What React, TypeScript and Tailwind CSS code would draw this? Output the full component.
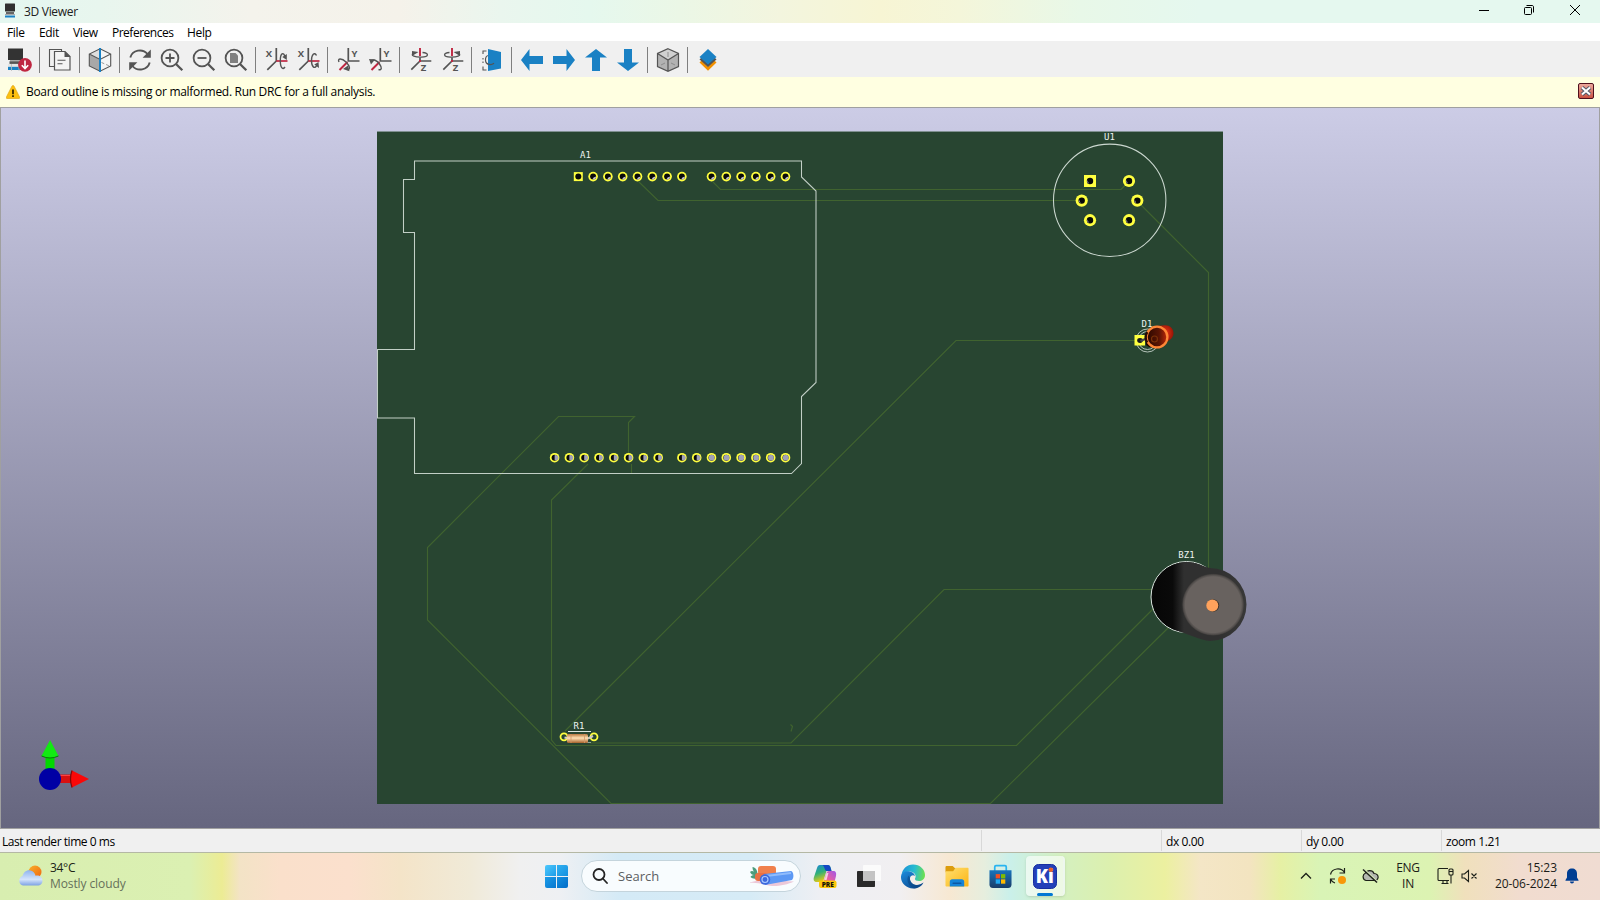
import React from "react";

const UI = "font-['Open_Sans','Noto_Sans',sans-serif]";

type IconProps = { children: React.ReactNode; size?: number };
function Icon({ children, size = 24 }: IconProps) {
  return (
    <svg width={size} height={size} viewBox="0 0 24 24" fill="none" className="block shrink-0 overflow-visible">
      {children}
    </svg>
  );
}

function Slot({ children }: { children: React.ReactNode }) {
  return <button className="flex h-9 w-8 shrink-0 items-center justify-center pt-0.5">{children}</button>;
}

function Sep() {
  return (
    <div className="flex h-9 w-2 shrink-0 items-center pl-[3px] pt-0.5">
      <div className="h-[26px] w-px bg-[#7f7f7f]" />
    </div>
  );
}

const G = "#545454";

const ReloadBoard = () => (
  <Icon>
    <rect x="0" y="0.5" width="15" height="11.5" fill="#333" />
    <rect x="2" y="12" width="11" height="1.5" fill="#aaa" />
    <rect x="1.5" y="13.3" width="12" height="2.6" fill="#555" />
    <rect x="0" y="16" width="15" height="2.5" fill="#e4e4e4" />
    <rect x="0" y="18.8" width="14" height="3.2" fill="#1a81c4" />
    <path d="M3.5 16v7M11 16v7" stroke="#bbb" strokeWidth="0.8" />
    <circle cx="17" cy="16.8" r="6.9" fill="#bf2641" />
    <path d="M17 12.5v8M13.8 17.2l3.2 3.4 3.2-3.4" stroke="#fff" strokeWidth="1.6" />
  </Icon>
);
const CopyIcon = () => (
  <Icon>
    <path d="M6.500 18.500H1.500v-17h12v2" stroke={G} strokeWidth="1.1" />
    <path d="M6.500 3.500H17l5 5v13.500H6.500z" fill="#f4f4f4" stroke={G} strokeWidth="1.2" />
    <path d="M16.500 3v6H22.500z" fill={G} />
    <path d="M9.500 12.200h8M9.500 15.700h5" stroke={G} strokeWidth="1.1" />
  </Icon>
);
const RayIcon = () => (
  <Icon>
    <path d="M12 0.8L22.700 6v12L12 23.200 1.300 18V6z" fill="#f5f5f5" />
    <path d="M12 0.800L1.300 6 12 11.500z" fill="#dedede" />
    <path d="M1.300 6L12 11.500v11.700L1.300 18z" fill="#a8a8a8" />
    <path d="M12 0.800L22.700 6v12L12 23.200 1.300 18V6zM1.300 6L12 11.500 22.700 6" stroke={G} strokeWidth="1.1" />
    <path d="M13.500 14.500l8 3.500" stroke="#999" strokeDasharray="3 2" />
    <path d="M12 0v24" stroke="#1a81c4" strokeWidth="2" />
  </Icon>
);
const RefreshIcon = () => (
  <Icon>
    <path d="M2.300 9.500C4.500 1.800 14.500 .200 19.500 6M21.700 14.500C19.500 22.200 9.500 23.800 4.500 18" stroke={G} strokeWidth="1.900" />
    <path d="M22.800 1.500v8.200h-8.200z" fill={G} />
    <path d="M1.200 22.500v-8.200h8.200z" fill={G} />
  </Icon>
);
function Magnifier({ children }: { children: React.ReactNode }) {
  return (
    <Icon>
      <circle cx="10" cy="10" r="8.400" stroke={G} strokeWidth="1.800" />
      <path d="M16 16l6.300 6.300" stroke={G} strokeWidth="2.300" />
      {children}
    </Icon>
  );
}
function AxisLabel({ x, y, t }: { x: number; y: number; t: string }) {
  return (
    <text x={x} y={y} fontSize="9.500" fontWeight="700" fill={G} fontFamily="Open Sans, sans-serif">
      {t}
    </text>
  );
}
function RotateX({ ccw }: { ccw?: boolean }) {
  return (
    <Icon>
      <AxisLabel x={1.8} y={8.7} t="X" />
      <path d="M12.300 0V13L3.300 21.800" stroke={G} strokeWidth="1.700" />
      <path d="M12.300 13H23.500" stroke="#bf2641" strokeWidth="1.700" />
      {ccw ? (
        <>
          <path d="M20.500 7.500C18.500 3.500 15.500 6.500 15.500 12.500S18.500 22 21 17" stroke={G} strokeWidth="1.400" />
          <path d="M18.300 16.500l4.200-2.500.500 6z" fill={G} />
        </>
      ) : (
        <>
          <path d="M21 9C19.500 3 16.300 5.500 16.300 12.500S18.500 22.500 21 19" stroke={G} strokeWidth="1.400" />
          <path d="M18.300 9l4.500-3v6z" fill={G} />
        </>
      )}
    </Icon>
  );
}
function RotateY({ ccw }: { ccw?: boolean }) {
  return (
    <Icon>
      <AxisLabel x={15.5} y={8.7} t="Y" />
      <path d="M12.300 0V13H23.500" stroke={G} strokeWidth="1.700" />
      <path d="M11.500 14L3.500 22" stroke="#bf2641" strokeWidth="1.900" />
      {ccw ? (
        <>
          <path d="M3 13C5 10.500 9 12.500 11.500 16S14 22.500 10.500 21.500" stroke={G} strokeWidth="1.400" />
          <path d="M1 11l6 .500-4 5z" fill={G} />
        </>
      ) : (
        <>
          <path d="M3 14C1 10 6 10 10 14s4.500 8 1.500 7.500" stroke={G} strokeWidth="1.400" />
          <path d="M7 21l5-3.500 1.500 5.800z" fill={G} />
        </>
      )}
    </Icon>
  );
}
function RotateZ({ ccw }: { ccw?: boolean }) {
  return (
    <Icon>
      <AxisLabel x={12.7} y={22.8} t="Z" />
      <path d="M12 9.500V13H23.300M12 13L3.300 21.700" stroke={G} strokeWidth="1.700" />
      <path d="M12 0V8M12 12v2" stroke="#bf2641" strokeWidth="1.900" />
      {ccw ? (
        <>
          <path d="M9.500 4.500C2.500 5 3 9 10.500 9.200 17 9.400 21.500 7.500 19 5.500" stroke={G} strokeWidth="1.300" />
          <path d="M13.500 4l6.500-1v5z" fill={G} />
        </>
      ) : (
        <>
          <path d="M14.500 4.500C21.500 5 21 9 13.500 9.200 7 9.400 2.500 7.500 5 5.500" stroke={G} strokeWidth="1.300" />
          <path d="M10.500 4L4 3v5z" fill={G} />
        </>
      )}
    </Icon>
  );
}
const FlipIcon = () => (
  <Icon>
    <path d="M3 6V3h3.500M3 18.500V22h3.500M3 10v1.500M3 13.500V15" stroke={G} strokeWidth="1.100" />
    <path d="M8.500 7.500C4.500 8 4.500 15.500 8.500 16" stroke={G} strokeWidth="1.200" />
    <path d="M8 1l13 3v16.500L8 23z" fill="#1a81c4" />
    <path d="M7 15.500c2 1.300 5 1.300 7-.200" stroke={G} strokeWidth="1.300" />
  </Icon>
);
function Arrow({ r }: { r: number }) {
  return (
    <Icon>
      <path d="M1 12L9.500 1v7H23v8H9.500v7z" fill="#1a81c4" transform={`rotate(${r} 12 12)`} />
    </Icon>
  );
}
const OrthoIcon = () => (
  <Icon>
    <path d="M12 0.700L22.500 5.500v13L12 23.300 1.500 18.500v-13z" fill="#b2b2b2" />
    <path d="M12 0.700L22.500 5.500 12 12 1.500 5.500z" fill="#d0d0d0" />
    <path d="M12 0.700L22.500 5.500v13L12 23.300 1.500 18.500v-13zM1.500 5.500L12 12 22.500 5.500M12 12v11" stroke={G} strokeWidth="1.200" />
    <path d="M12 4v5M5 17l4-2M19 17l-4-2" stroke="#888" strokeWidth="0.900" />
  </Icon>
);
const LayersIcon = () => (
  <Icon>
    <path d="M3.500 14.500L12 22.800l8.500-8.300-2-2-6.500 6-6.500-6z" fill="#f29100" />
    <path d="M3.500 11.500L12 19l8.500-7.500-2-2-6.500 6-6.500-6z" fill={G} />
    <path d="M12 1l8.500 8L12 16.500 3.500 9z" fill="#1a81c4" />
  </Icon>
);

function Toolbar() {
  return (
    <div className="flex h-9 shrink-0 items-center bg-[#f0f0f0] pl-1">
      <Slot><ReloadBoard /></Slot>
      <Sep />
      <Slot><CopyIcon /></Slot>
      <Sep />
      <Slot><RayIcon /></Slot>
      <Sep />
      <Slot><RefreshIcon /></Slot>
      <Slot><Magnifier><path d="M10 5.500v9M5.500 10h9" stroke={G} strokeWidth="1.800" /></Magnifier></Slot>
      <Slot><Magnifier><path d="M5.500 10h9" stroke={G} strokeWidth="1.800" /></Magnifier></Slot>
      <Slot><Magnifier><path d="M6 5h5.500L14 7.500V15H6z" fill="#808080" /></Magnifier></Slot>
      <Sep />
      <Slot><RotateX /></Slot>
      <Slot><RotateX ccw /></Slot>
      <Sep />
      <Slot><RotateY /></Slot>
      <Slot><RotateY ccw /></Slot>
      <Sep />
      <Slot><RotateZ /></Slot>
      <Slot><RotateZ ccw /></Slot>
      <Sep />
      <Slot><FlipIcon /></Slot>
      <Sep />
      <Slot><Arrow r={0} /></Slot>
      <Slot><Arrow r={180} /></Slot>
      <Slot><Arrow r={90} /></Slot>
      <Slot><Arrow r={270} /></Slot>
      <Sep />
      <Slot><OrthoIcon /></Slot>
      <Sep />
      <Slot><LayersIcon /></Slot>
    </div>
  );
}

function Pad({ x, y, shade, square }: { x: number; y: number; shade: number; square?: boolean }) {
  return (
    <g>
      {square ? (
        <rect x={x - 4.5} y={y - 4.5} width="9" height="9" fill="#ffff40" />
      ) : (
        <circle cx={x} cy={y} r="4.800" fill="#ffff40" />
      )}
      <circle cx={x} cy={y} r="3" fill="#0a0a0a" />
      {shade === 1 && <path d={`M${x - 0.8} ${y + 2.9}Q${x} ${y + 0.2} ${x + 2.9} ${y - 0.2}A3 3 0 0 1 ${x - 0.8} ${y + 2.9}z`} fill="#c0c0d8" />}
      {shade === 2 && <path d={`M${x} ${y - 2.4}A2.700 2.700 0 1 1 ${x} ${y + 2.4}z`} fill="#a0a0b8" />}
      {shade === 3 && <circle cx={x + 0.2} cy={y} r="2.900" fill="#a0a0b8" />}
    </g>
  );
}

function BigPad({ x, y, square }: { x: number; y: number; square?: boolean }) {
  return (
    <g>
      {square ? (
        <rect x={x - 6} y={y - 6} width="12" height="12" fill="#ffff40" />
      ) : (
        <circle cx={x} cy={y} r="6.100" fill="#ffff40" />
      )}
      <circle cx={x} cy={y} r="3.200" fill="#080808" />
      <path d={`M${x - 2.6} ${y - 1}v2.500l1.500 1.200z`} fill="#a8a8c0" />
    </g>
  );
}

const range = (n: number) => Array.from({ length: n }, (_, i) => i);

function Ref({ x, y, t }: { x: number; y: number; t: string }) {
  return (
    <text x={x} y={y} textAnchor="middle" fontSize="9" fill="#eef4f0" fontFamily="DejaVu Sans Mono, monospace">
      {t}
    </text>
  );
}

function Board() {
  return (
    <svg viewBox="1 108 1598 720" className="block h-[720px] w-[1598px]" fill="none">
      <defs>
        <linearGradient id="bz" x1="1152" y1="0" x2="1246" y2="0" gradientUnits="userSpaceOnUse">
          <stop offset="0" stopColor="#060606" />
          <stop offset="0.220" stopColor="#0a0a0a" />
          <stop offset="0.340" stopColor="#303030" />
          <stop offset="0.700" stopColor="#303030" />
          <stop offset="1" stopColor="#383838" />
        </linearGradient>
        <radialGradient id="cap">
          <stop offset="0.900" stopColor="#68625f" />
          <stop offset="0.960" stopColor="#504c4a" />
          <stop offset="1" stopColor="#383635" />
        </radialGradient>
        <radialGradient id="ledTip" cx="0.550" cy="0.350">
          <stop offset="0" stopColor="#f03818" />
          <stop offset="1" stopColor="#8c1004" />
        </radialGradient>
        <linearGradient id="ledIn" x1="0" x2="1">
          <stop offset="0" stopColor="#2c0800" />
          <stop offset="0.600" stopColor="#5a1404" />
          <stop offset="1" stopColor="#c02808" />
        </linearGradient>
        <linearGradient id="res" x1="0" y1="0" x2="0" y2="1">
          <stop offset="0" stopColor="#b8773f" />
          <stop offset="0.450" stopColor="#ffe0b4" />
          <stop offset="1" stopColor="#a8622c" />
        </linearGradient>
      </defs>
      <rect x="377" y="131.500" width="846" height="672.500" fill="#284531" />
      <path d="M377 131.500H1223" stroke="#7f9090" strokeWidth="1" />

      <g stroke="#40632f" strokeWidth="1.150">
        <path d="M639 182l19 18.500H1082" />
        <path d="M713 182l7.500 7.500H1121l8-8" />
        <path d="M1137 201l71.500 71.500V575" />
        <path d="M1140 340.500H956L565 731" />
        <path d="M1160 589.500H944L791 743H590" />
        <path d="M1156 606L1016.500 745.500H556L551.500 740V500L588 464" />
        <path d="M1170 626L990.500 803.500H611L427.500 620V547.500L558.500 416.500H634.500L628.500 422.500V457M631.500 464v10" />
        <path d="M790.500 724.500l2 2-1.500 5" />
      </g>

      <path
        d="M414.500 161H801.500V177L816 191V382.500L801.500 396.500V463.500L791.500 473.500H414.500V418H377.500V349.500H414.500V232.500H403.500V179.500H414.500z"
        stroke="#c2cfc6"
        strokeWidth="1.050"
      />
      <Ref x={585.5} y={157.5} t="A1" />
      {range(8).map((i) => (
        <Pad key={i} x={578.3 + i * 14.8} y={176.6} shade={i > 0 ? 1 : 0} square={i === 0} />
      ))}
      {range(6).map((i) => (
        <Pad key={i} x={711.5 + i * 14.8} y={176.6} shade={1} />
      ))}
      {range(8).map((i) => (
        <Pad key={i} x={554.6 + i * 14.8} y={457.7} shade={2} />
      ))}
      {range(8).map((i) => (
        <Pad key={i} x={681.9 + i * 14.8} y={457.7} shade={i < 2 ? 2 : 3} />
      ))}

      <Ref x={1109.5} y={139.5} t="U1" />
      <circle cx="1109.700" cy="200.300" r="56.200" stroke="#ccd8d0" strokeWidth="1.050" />
      <BigPad x={1090} y={181} square />
      <BigPad x={1129} y={181} />
      <BigPad x={1081.7} y={200.6} />
      <BigPad x={1137.3} y={200.6} />
      <BigPad x={1090} y={220.2} />
      <BigPad x={1129} y={220.2} />

      <Ref x={1147} y={326.5} t="D1" />
      <circle cx="1147.500" cy="340.500" r="11.500" stroke="#c4d0c8" strokeWidth="0.900" />
      <circle cx="1147.500" cy="340.500" r="9" stroke="#c4d0c8" strokeWidth="0.900" />
      <rect x="1134.500" y="335" width="10.500" height="10.500" fill="#ffff40" />
      <ellipse cx="1140" cy="340.500" rx="2.800" ry="2.400" fill="#16161c" />
      <path d="M1140.500 341l6-2.500" stroke="#44444c" strokeWidth="2.200" />
      <path d="M1146 332h10v15h-7l-3-2z" fill="#200800" />
      <path d="M1155 326l10-0.700c5 0 8.500 3.500 8.500 8 0 4-3 7-8 9l-8 5z" fill="url(#ledTip)" />
      <circle cx="1157" cy="337" r="10.400" fill="url(#ledIn)" stroke="#ff8636" strokeWidth="2.300" />
      <path d="M1147.200 342.500a10 10 0 0 1 0-10.500" stroke="#2a0c04" strokeWidth="2.400" />
      <circle cx="1154.500" cy="339" r="3" stroke="#7a3008" strokeWidth="1.200" />

      <Ref x={1186.5} y={558} t="BZ1" />
      <circle cx="1186.500" cy="597" r="35.500" fill="#070707" stroke="#dce6e0" strokeWidth="1" />
      <path d="M1187 562C1196 562 1202 566 1210 568A36.500 36.500 0 0 1 1210 641C1200 640 1188 634 1178 631C1162 626 1152 612 1152.500 597C1152.500 577 1168 562 1187 562z" fill="url(#bz)" />
      <circle cx="1213.200" cy="604.700" r="31" fill="url(#cap)" />
      <circle cx="1213" cy="605.500" r="6.200" fill="#3c3028" />
      <circle cx="1212.300" cy="605.500" r="6" fill="#ffa25c" />

      <Ref x={579} y={728.7} t="R1" />
      <path d="M568 731.500h23" stroke="#dce6e0" />
      <path d="M568 742.500h23" stroke="#8ea495" />
      <circle cx="564" cy="736.800" r="3.500" stroke="#ffff40" strokeWidth="1.800" />
      <circle cx="594" cy="736.800" r="3.500" stroke="#ffff40" strokeWidth="1.800" />
      <path d="M564.500 737.500l4 1M588 738.500l5-2.500" stroke="#d4ccc4" strokeWidth="2" />
      <rect x="567" y="734" width="21" height="9" rx="1.500" fill="url(#res)" />
      <path d="M571 734v9M584.500 734v9" stroke="#d09868" strokeWidth="0.800" />

      <g>
        <rect x="45.500" y="756" width="9" height="14" fill="#00d800" />
        <path d="M50 740L58.500 756q-8.500 3.500-17 0z" fill="#12ea12" />
        <path d="M41.500 756q8.500 4 17 0" stroke="#087808" strokeWidth="1" />
        <rect x="59" y="774.500" width="14" height="8.500" fill="#d81010" />
        <path d="M59 775.500h14" stroke="#ff4040" />
        <path d="M89 779L72 770.500q-3 8.500 0 17z" fill="#fa0808" />
        <path d="M72 770.500q-3 8.500 0 17" stroke="#800808" strokeWidth="1.200" />
        <circle cx="50" cy="779" r="11" fill="#0000a4" />
      </g>
    </svg>
  );
}

function TaskSlot({ children, active }: { children: React.ReactNode; active?: boolean }) {
  return (
    <div className="flex w-11 shrink-0 items-center justify-center">
      {active ? (
        <div className="relative flex h-10 w-[39px] items-center justify-center rounded border-r-2 border-[#eef7ee] bg-white/60 shadow-sm">
          {children}
          <div className="absolute bottom-0 left-[11px] h-[3px] w-4 rounded-full bg-[#0078d4]" />
        </div>
      ) : (
        children
      )}
    </div>
  );
}

function Taskbar() {
  return (
    <div className="flex h-12 shrink-0 items-stretch border-t border-[#b4b8a4] bg-[linear-gradient(90deg,#d8eeb0_0px,#dbf0b2_190px,#ecec94_222px,#f3e3c6_240px,#fae0cb_280px,#fbe0cd_350px,#f4e4c8_400px,#f0ead8_470px,#f0f0f0_520px,#eef0f3_560px,#d4eaf6_620px,#d6ebf6_750px,#eeeff3_820px,#f1eff1_900px,#f7e8d2_950px,#e6eede_985px,#caf0ea_1010px,#d4f0c0_1060px,#dcf0ae_1110px,#ecf0a0_1165px,#f4e6c6_1200px,#f3e4c0_1250px,#e6f0a4_1280px,#d9f4b6_1320px,#dcf3b2_1430px,#f0e0bc_1465px,#f1dccf_1520px,#f0dcd2_1600px)] pb-px">
      <div className="flex w-[543px] items-center gap-[7px] pl-[18px]">
        <svg width="25" height="22" viewBox="0 0 25 22">
          <defs>
            <linearGradient id="cl" x1="0" y1="0" x2="0" y2="1">
              <stop offset="0" stopColor="#8fb4ee" />
              <stop offset="0.600" stopColor="#d4e4fc" />
              <stop offset="1" stopColor="#7da2e4" />
            </linearGradient>
            <linearGradient id="sn" x1="0" x2="1" y1="0" y2="1">
              <stop offset="0" stopColor="#f8b02c" />
              <stop offset="1" stopColor="#f06410" />
            </linearGradient>
          </defs>
          <circle cx="17" cy="7" r="6.500" fill="url(#sn)" />
          <path d="M5 20.500a5 5 0 0 1-.500-9.500C5.500 7 9 4.500 12.500 5.500c3 .800 4.500 3 5 5.200 3.500-.900 7 1.300 7 5 0 2.800-2 4.800-5 4.800z" fill="url(#cl)" />
        </svg>
        <div className="text-[12px] leading-4 tracking-[-0.1px]">
          <div className="tracking-[-0.3px] text-[#1c2416]">34°C</div>
          <div className="text-[#66705a]">Mostly cloudy</div>
        </div>
      </div>
      <div className="flex w-[38px] items-center pl-0.5">
        <div className="grid h-[23px] w-[23px] grid-cols-2 gap-px">
          <div className="rounded-tl-xs bg-gradient-to-br from-[#4cc8fc] to-[#1a9ce8]" />
          <div className="rounded-tr-xs bg-gradient-to-br from-[#30b0f0] to-[#1490e0]" />
          <div className="rounded-bl-xs bg-gradient-to-br from-[#1c9ce8] to-[#0878d0]" />
          <div className="rounded-br-xs bg-gradient-to-br from-[#1490e0] to-[#046cc8]" />
        </div>
      </div>
      <div className="flex w-[222px] items-center">
        <div className="flex h-8 w-[220px] items-center rounded-full border border-[#c4d4dc] bg-[#f8fcfe] pl-[10px] pr-[5px]">
          <svg width="16" height="16" viewBox="0 0 16 16" fill="none" stroke="#242424" strokeWidth="1.800">
            <circle cx="7" cy="6.500" r="5.500" />
            <path d="M10.800 10.500l4.200 4.500" strokeLinecap="round" />
          </svg>
          <span className="ml-[10px] text-[13px] text-[#5c6062]">Search</span>
          <svg width="46" height="24" viewBox="0 0 46 24" className="ml-auto" fill="none">
            <path d="M1 18.500c8-3 30-2 44-1-6 3-16 5-22 4.500S8 18 1 19z" fill="#ecc8d8" />
            <path d="M8 7C7 4 5 3 3.500 3c0 2 .500 3.500 1.500 4.500C3 6.500 2 7 1 8c1 2 2 3 4 3-2 0-3 1-3.500 2 2 2 5 2 8 1z" fill="#4c9c7c" />
            <rect x="9" y="2" width="18" height="9" rx="3" fill="#f0804c" />
            <rect x="6" y="9" width="13" height="8" rx="3" fill="#e87044" />
            <path d="M15 10l27-3c3 1 3 7 1 9l-27 5z" fill="#5c98f4" />
            <path d="M17 12l25-3" stroke="#90bcfc" strokeWidth="2" />
            <circle cx="16" cy="15.500" r="5.200" fill="#3c68dc" />
            <circle cx="16" cy="15.500" r="3" stroke="#a8c8ff" strokeWidth="1.200" />
          </svg>
        </div>
      </div>
      <TaskSlot>
        <svg width="24" height="24" viewBox="0 0 24 24">
          <defs>
            <linearGradient id="cp1" x1="0" y1="0" x2="0.400" y2="1">
              <stop offset="0" stopColor="#1884dc" />
              <stop offset="0.500" stopColor="#30b078" />
              <stop offset="1" stopColor="#f0cc10" />
            </linearGradient>
            <linearGradient id="cp2" x1="1" y1="0" x2="0" y2="1">
              <stop offset="0" stopColor="#a058e8" />
              <stop offset="0.600" stopColor="#e860a0" />
              <stop offset="1" stopColor="#f89050" />
            </linearGradient>
          </defs>
          <path d="M7 1h8c2 0 2.500 2 3 4l.500 2h-5L10 18H4c-3 0-4-2-3-5L4 4c.500-2 1.500-3 3-3z" fill="url(#cp1)" />
          <path d="M9 1h6c2 0 2.500 2 3.500 6h-5c-2 0-2-6-4.500-6z" fill="#1448c4" />
          <path d="M16 7h4c3 0 3.500 2 3 5l-2 8H10l3-10c.500-2 1.500-3 3-3z" fill="url(#cp2)" />
          <path d="M13.500 9h2l-2 7h-2z" fill="#fff" opacity="0.700" />
          <rect x="6" y="16.500" width="17.500" height="7.500" rx="2" fill="#fcc80c" />
          <text x="14.700" y="22.700" textAnchor="middle" fontSize="6.500" fontWeight="800" fill="#181408" fontFamily="Open Sans, sans-serif">PRE</text>
        </svg>
      </TaskSlot>
      <TaskSlot>
        <svg width="24" height="24" viewBox="0 0 24 24">
          <rect x="0" y="7" width="18" height="16" rx="0.800" fill="#2a2a2a" />
          <rect x="6" y="1" width="18" height="16" rx="0.800" fill="#fbfbfb" />
          <rect x="6" y="7" width="12" height="10" fill="#c4c4c4" />
        </svg>
      </TaskSlot>
      <TaskSlot>
        <svg width="24" height="25" viewBox="0 0 24 24">
          <defs>
            <linearGradient id="e1" x1="0" y1="0.300" x2="1" y2="0.400">
              <stop offset="0" stopColor="#1c90d8" />
              <stop offset="0.550" stopColor="#28bcd0" />
              <stop offset="1" stopColor="#6ce050" />
            </linearGradient>
            <linearGradient id="e2" x1="0" y1="0" x2="0.700" y2="1">
              <stop offset="0" stopColor="#1c8cdc" />
              <stop offset="1" stopColor="#0c4c94" />
            </linearGradient>
          </defs>
          <path d="M0.500 11C1 4.500 6 0 12 0c7 0 12 5 12 10.500 0 4-3 6-6 6-2.500 0-4.500-.800-4-2.500 1.500-2 .500-5.500-3-6.500C6.500 6.300 2.500 8 .500 11z" fill="url(#e1)" />
          <path d="M0 12C.500 8.500 4 6.500 7.500 6.800c3.500.300 6 2.200 6.500 4.700-1.500-1.500-4.500-1-5 2-.500 3.500 3 7 7 7 2.500 0 4.500-1 6.500-2.500C20.500 22 16.500 24 12 24 5 24-.500 18 0 12z" fill="url(#e2)" />
          <path d="M7.500 11C5 15 7 21.500 13 23.900 16.500 23.700 20 22 22.500 18c-2 1.500-4 2.500-6.500 2.500-4 0-7.500-3.500-7-7z" fill="#083f7c" opacity="0.500" />
        </svg>
      </TaskSlot>
      <TaskSlot>
        <svg width="24" height="24" viewBox="0 0 25 24">
          <defs>
            <linearGradient id="f1" x1="0" y1="0" x2="1" y2="1">
              <stop offset="0" stopColor="#ffe070" />
              <stop offset="1" stopColor="#fcb414" />
            </linearGradient>
          </defs>
          <path d="M0.500 3c0-1 .500-1.500 1.500-1.500h6l2.500 2.500h5v4h-15z" fill="#dc9c0c" />
          <path d="M0.500 7h8L11 3.500h12.500c.700 0 1 .500 1 1v17.500c0 .700-.300 1-1 1h-22c-.700 0-1-.300-1-1z" fill="url(#f1)" />
          <path d="M5 23v-5c0-1.500 1-2.500 2.500-2.500h10c1.500 0 2.500 1 2.500 2.500v5z" fill="#1484d8" />
          <path d="M8.500 19.500h8" stroke="#0c58a4" strokeWidth="1.500" strokeLinecap="round" />
        </svg>
      </TaskSlot>
      <TaskSlot>
        <svg width="23" height="25" viewBox="0 0 24 25" className="mr-px">
          <defs>
            <linearGradient id="s1" x1="0" y1="0" x2="0" y2="1">
              <stop offset="0" stopColor="#1874bc" />
              <stop offset="1" stopColor="#183c68" />
            </linearGradient>
          </defs>
          <path d="M6 7V2.500C6 1.700 6.500 1.200 7.300 1.200h9.400c.800 0 1.300.500 1.300 1.300V7" fill="none" stroke="#28b4f0" strokeWidth="1.800" />
          <path d="M.500 6h23v15c0 2-1.500 3.500-3.500 3.500H4C2 24.500.500 23 .500 21z" fill="url(#s1)" />
          <path d="M7 10h4.500v4.500H7z" fill="#f25022" />
          <path d="M12.500 10H17v4.500h-4.500z" fill="#7fba00" />
          <path d="M7 15.500h4.500V20H7z" fill="#20a8f0" />
          <path d="M12.500 15.500H17V20h-4.500z" fill="#ffb900" />
        </svg>
      </TaskSlot>
      <TaskSlot active>
        <svg width="24" height="25" viewBox="0 0 24 25" className="ml-0.5">
          <rect x="0.500" y="0.500" width="23" height="24" rx="5" fill="#2340b8" stroke="#1830a0" />
          <text x="2.800" y="19" fontSize="18.500" fontWeight="800" fill="#fff" fontFamily="Open Sans, sans-serif" textLength="18" lengthAdjust="spacingAndGlyphs">Ki</text>
          <circle cx="17.800" cy="5.800" r="2.300" fill="#e8642c" />
        </svg>
      </TaskSlot>

      <div className="ml-auto flex items-center">
        <svg width="12" height="8" viewBox="0 0 12 8" fill="none" stroke="#1c2018" strokeWidth="1.300" className="mr-[17px]">
          <path d="M1 6.500l5-5 5 5" />
        </svg>
        <svg width="18" height="18" viewBox="0 0 18 18" fill="none" stroke="#1c2018" strokeWidth="1.200" className="mr-[14px]">
          <path d="M1.500 7.500C3 1 12 0 15.500 5.500M15.500 1v5h-5M1.500 16.500v-4.500h4.500M1.500 12c1 2.200 3 3.500 4.500 4" />
          <circle cx="13" cy="13" r="4" fill="#f89808" stroke="none" />
        </svg>
        <svg width="18" height="16" viewBox="0 0 18 16" fill="none" className="mr-[17px]">
          <path d="M5 12.500a4 4 0 0 1-.500-7.500C6 2 11.500 1.500 13 5.500c3 0 4.500 2 4 4.500-.300 1.500-1.500 2.500-3.500 2.500z" fill="#b4b8b0" stroke="#1c2018" strokeWidth="1.200" />
          <path d="M3 1l14 13" stroke="#d4e8b8" strokeWidth="1.300" />
          <path d="M2 1.500l14 13" stroke="#1c2018" strokeWidth="1.400" />
        </svg>
        <div className="w-6 text-center text-[12px] leading-4 tracking-[-0.3px] text-[#1c2018]">
          <div>ENG</div>
          <div>IN</div>
        </div>
        <svg width="17" height="18" viewBox="0 0 17 18" fill="none" stroke="#1c2018" strokeWidth="1.100" className="ml-[17px]">
          <path d="M11 1.500H2c-.600 0-1 .400-1 1v10c0 .600.400 1 1 1h10M4.500 16.500h7M6 13.500v3M10 13.500v3M14 8v8.500" />
          <rect x="12" y="2" width="4" height="6" rx="1" />
          <path d="M12 4.500h4" />
        </svg>
        <svg width="17" height="14" viewBox="0 0 17 14" fill="none" stroke="#1c2018" strokeWidth="1.100" className="ml-[7px]">
          <path d="M1 5h2.500L7.500 1.500v11L3.500 9H1zM10.500 4.500l5 5M15.500 4.500l-5 5" />
        </svg>
        <div className="ml-4 w-[63px] whitespace-nowrap text-right text-[12px] leading-4 tracking-[-0.05px] text-[#1c1c18]">
          <div>15:23</div>
          <div>20-06-2024</div>
        </div>
        <svg width="14" height="16" viewBox="0 0 14 16" fill="#003e92" className="ml-2 mr-[21px]">
          <path d="M7 .500c3 0 5 2 5 5v4l1.500 2.500v.700H.500V12L2 9.500v-4c0-3 2-5 5-5zM5 13.500h4c0 1.200-.800 2-2 2s-2-.800-2-2z" />
        </svg>
      </div>
    </div>
  );
}

export default function App() {
  return (
    <div className={`flex h-[900px] w-[1600px] flex-col overflow-hidden bg-[#f0f0f0] text-[12px] leading-4 text-black ${UI}`}>
      <div className="flex h-[23px] shrink-0 items-center bg-[linear-gradient(90deg,#e4f7f0_0px,#e8f6ee_100px,#f4f3ec_250px,#f5f2ea_400px,#eaf6ee_500px,#e5f8ee_590px,#ebf7e6_680px,#f3f5de_780px,#f7f5d4_880px,#f4f6da_960px,#e8f8e8_1080px,#e5f8ef_1200px,#e5f8ef_1600px)] pl-[5px]">
        <svg width="10" height="15" viewBox="0 0 10 15" className="-mt-[3px]">
          <rect width="10" height="8" y="0.500" rx="0.500" fill="#303030" />
          <rect x="1" y="9" width="8" height="2" fill="#666" />
          <rect x="0" y="11" width="10" height="1" fill="#aaa" />
          <rect x="0" y="12.500" width="10" height="2" fill="#1a81c4" />
        </svg>
        <span className="ml-[9px] pt-px tracking-[-0.3px] text-[#202020]">3D Viewer</span>
        <div className="-mt-[3px] ml-auto flex items-center pr-5 text-black">
          <svg width="10" height="10" viewBox="0 0 10 10" stroke="currentColor" className="mr-[35px]">
            <path d="M0 5.500h10" />
          </svg>
          <svg width="10" height="10" viewBox="0 0 10 10" fill="none" stroke="currentColor" className="mr-9">
            <rect x="0.500" y="2.500" width="7" height="7" rx="1" />
            <path d="M2.500 0.500H8c1 0 1.500.500 1.500 1.500v5.500" />
          </svg>
          <svg width="10" height="10" viewBox="0 0 10 10" stroke="currentColor">
            <path d="M0 0l10 10M10 0L0 10" />
          </svg>
        </div>
      </div>

      <div className="flex h-[18px] shrink-0 items-center bg-white pl-[7px] pt-0.5 tracking-[-0.35px]">
        <span className="w-8">File</span>
        <span className="w-[34px]">Edit</span>
        <span className="w-[39px]">View</span>
        <span className="w-[75px] tracking-[-0.5px]">Preferences</span>
        <span>Help</span>
      </div>

      <Toolbar />

      <div className="flex h-[30px] shrink-0 items-center bg-[#ffffe1] pl-1.5 pr-[6px]">
        <svg width="14" height="14" viewBox="0 0 14 14">
          <path d="M7 0.500c.600 0 .900.300 1.100.700l5.600 11c.400.800 0 1.300-.700 1.300H1c-.700 0-1.100-.500-.700-1.300l5.600-11c.200-.400.500-.700 1.100-.700z" fill="#fcc010" stroke="#dca010" strokeWidth="0.600" />
          <path d="M7 4.500v4.700M7 10.300v1.700" stroke="#201800" strokeWidth="1.600" />
        </svg>
        <span className="ml-1.5 tracking-[-0.3px]">Board outline is missing or malformed. Run DRC for a full analysis.</span>
        <button className="-mt-0.5 ml-auto flex h-4 w-4 items-center justify-center rounded-[2px] border border-[#50101c] bg-gradient-to-b from-[#eca89c] to-[#c85040]">
          <svg width="12" height="10" viewBox="0 0 12 10">
            <path d="M2 1.500l8 7M10 1.500l-8 7" stroke="#505868" strokeWidth="4" />
            <path d="M2 1.500l8 7M10 1.500l-8 7" stroke="#fff" strokeWidth="2" />
          </svg>
        </button>
      </div>

      <div className="h-[722px] shrink-0 border border-[#a0a0a0] bg-[linear-gradient(180deg,#cccce6,#66667f)]">
        <Board />
      </div>

      <div className="flex h-[23px] shrink-0 items-center tracking-[-0.25px]">
        <div className="w-[981px] pl-0.5 pt-0.5 tracking-[-0.45px]">Last render time 0 ms</div>
        <div className="h-[21px] w-[180px] border-l border-[#d8d8d8]" />
        <div className="flex h-[21px] w-[140px] items-center border-l border-[#d8d8d8] pl-1 pt-0.5 tracking-[-0.4px]">dx 0.00</div>
        <div className="flex h-[21px] w-[140px] items-center border-l border-[#d8d8d8] pl-1 pt-0.5 tracking-[-0.4px]">dy 0.00</div>
        <div className="flex h-[21px] flex-1 items-center border-l border-[#d8d8d8] pl-1 pt-0.5 tracking-[-0.4px]">zoom 1.21</div>
      </div>

      <Taskbar />
    </div>
  );
}
